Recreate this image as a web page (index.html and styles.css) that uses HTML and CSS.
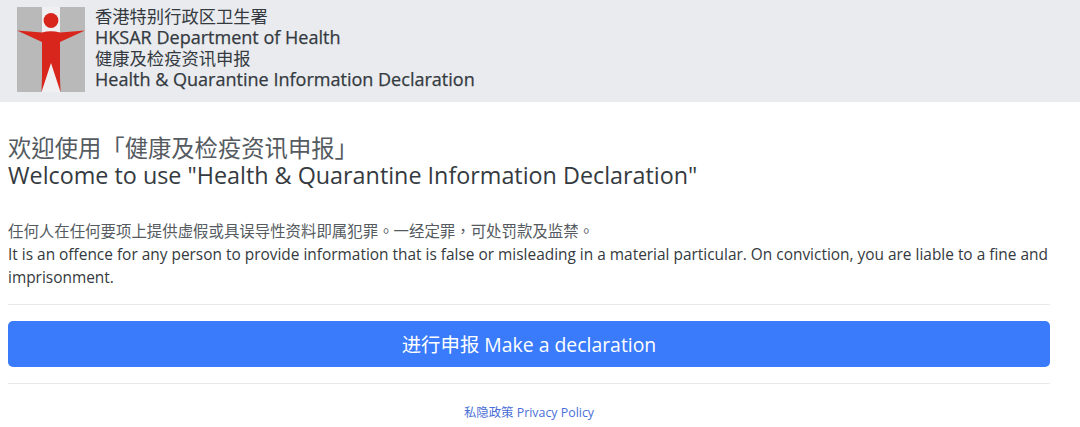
FILE: index.html
```html
<!DOCTYPE html>
<html lang="zh-TW">
<head>
<meta charset="utf-8">
<title>Health &amp; Quarantine Information Declaration</title>
<link rel="stylesheet" href="styles.css">
</head>
<body>
<header class="site-header">
  <svg class="logo" viewBox="0 0 68 85" aria-hidden="true">
    <rect width="68" height="85" fill="#b9b9b9"/>
    <rect x="25" width="18" height="85" fill="#f0f0f3"/>
    <path d="M0 23.5 L25 25.5 Q34 23 43 25.5 L68 23.5 L43 35 L43 70 L43.5 85 L34 56 L24.5 85 L25 70 L25 35 Z" fill="#d9261c"/>
    <circle cx="34" cy="13.5" r="7.4" fill="#d9261c"/>
  </svg>
  <div class="titles">
    <div class="title-cjk">香港特别行政区卫生署</div>
    <div class="title-en">HKSAR Department of Health</div>
    <div class="title-cjk">健康及检疫资讯申报</div>
    <div class="title-en">Health &amp; Quarantine Information Declaration</div>
  </div>
</header>
<main class="content">
  <h1 class="welcome"><span class="soft">欢迎使用「健康及检疫资讯申报」</span><br>Welcome to use "Health &amp; Quarantine Information Declaration"</h1>
  <p class="notice"><span class="soft">任何人在任何要项上提供虚假或具误导性资料即属犯罪。一经定罪，可处罚款及监禁。</span><br>It is an offence for any person to provide information that is false or misleading in a material particular. On conviction, you are liable to a fine and imprisonment.</p>
  <hr class="rule">
  <a class="declare" href="#">进行申报 Make a declaration</a>
  <hr class="rule">
  <p class="policy"><a href="#">私隐政策 Privacy Policy</a></p>
</main>
</body>
</html>
```
FILE: styles.css
```css
* { box-sizing: border-box; }
html, body { margin: 0; background: #fff; }
body {
  font-family: "Open Sans", "Noto Sans CJK TC", sans-serif;
  color: #343a40;
  overflow: hidden;
}
.site-header {
  display: flex;
  align-items: center;
  gap: 10px;
  height: 102px;
  padding: 0 0 3px 17px;
  background: #e9ebef;
}
.logo { width: 68px; height: 85px; flex: none; }
.titles { padding-bottom: 4px; line-height: 21px; color: #343a40; }
.title-cjk { font-size: 17.3px; }
.title-en { font-size: 18.05px; -webkit-text-stroke: 0.25px #343a40; }
.soft { color: #555b61; }
.content { padding: 0 30px 0 8px; }
.welcome {
  margin: 33px 0 0;
  font-size: 23.34px;
  font-weight: 400;
  line-height: 27px;
  color: #343a40;
}
.notice {
  margin: 31px 0 15px;
  font-size: 15.43px;
  line-height: 23px;
  color: #343a40;
}
.rule {
  margin: 0 0 16px;
  border: 0;
  border-top: 1px solid #e9e9e9;
}
.declare {
  display: block;
  height: 46px;
  margin-bottom: 16px;
  line-height: 48px;
  text-align: center;
  font-size: 19.4px;
  color: #fff;
  background: #397bfb;
  border-radius: 5px;
  text-decoration: none;
}
.policy { margin: 21px 0 0; text-align: center; font-size: 12.4px; line-height: 16px; }
.policy a { color: #4a6fd8; text-decoration: none; }
```
